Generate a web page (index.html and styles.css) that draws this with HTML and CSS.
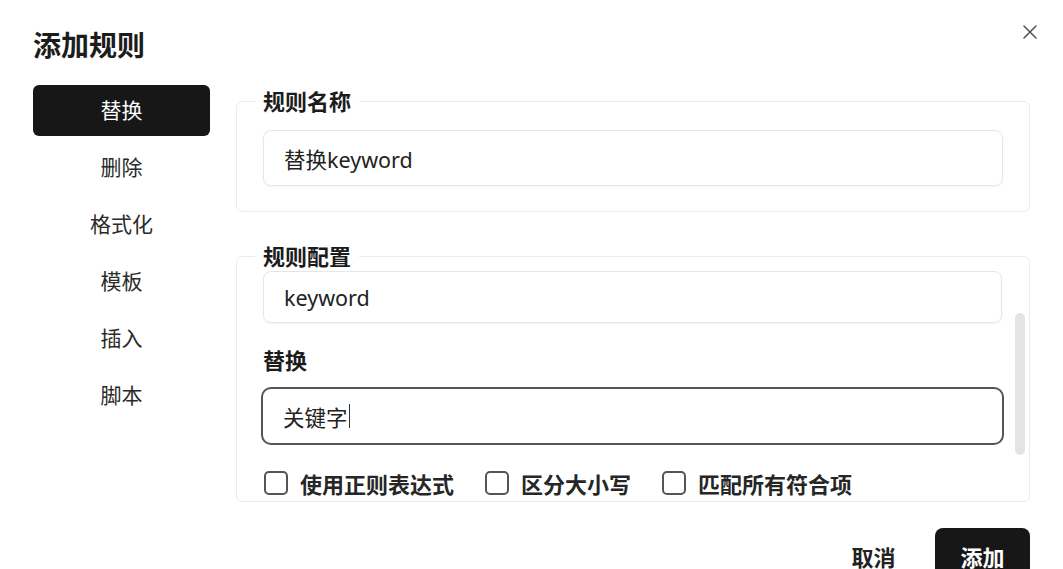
FILE: index.html
```html
<!DOCTYPE html>
<html lang="zh">
  <head>
    <meta charset="UTF-8">
    <meta name="viewport" content="width=device-width, initial-scale=1">
    <link rel="stylesheet" href="styles.css">
  </head>
  <body>
    <div class="dialog">
      <div class="header">
        <h1 class="title">添加规则</h1>
        <span class="close">
          <svg width="16" height="16" viewBox="0 0 16 16"><path d="M2 2L14 14M14 2L2 14" stroke="#555" stroke-width="1.6" stroke-linecap="round"/></svg>
        </span>
      </div>

      <div class="content">
        <ul class="menu">
          <li class="menu-item active">替换</li>
          <li class="menu-item">删除</li>
          <li class="menu-item">格式化</li>
          <li class="menu-item">模板</li>
          <li class="menu-item">插入</li>
          <li class="menu-item">脚本</li>
        </ul>

        <div class="main">
          <fieldset class="group">
            <legend>规则名称</legend>
            <div class="field">替换keyword</div>
          </fieldset>

          <fieldset class="group config">
            <legend>规则配置</legend>
            <div class="scroll">
              <div class="scroll-body">
                <div class="field short">keyword</div>
                <div class="label">替换</div>
                <div class="field focused">关键字<span class="caret"></span></div>
                <div class="checks">
                  <label class="check"><span class="box"></span>使用正则表达式</label>
                  <label class="check"><span class="box"></span>区分大小写</label>
                  <label class="check"><span class="box"></span>匹配所有符合项</label>
                </div>
              </div>
              <div class="scrollbar"><div class="thumb"></div></div>
            </div>
          </fieldset>

          <div class="footer">
            <button class="btn ghost">取消</button>
            <button class="btn primary">添加</button>
          </div>
        </div>
      </div>
    </div>
  </body>
</html>
```

FILE: styles.css
```css
html, body {
  margin: 0;
  height: 100%;
  overflow: hidden;
  background: #fff;
}
body {
  font-family: "Noto Sans", "Noto Sans CJK SC", sans-serif;
  color: #222;
}
.dialog {
  padding: 25px 33px 0 33px;
}
.header {
  display: flex;
  justify-content: space-between;
  align-items: center;
  height: 40px;
}
.title {
  margin: 0;
  font-size: 28px;
  line-height: 40px;
  font-weight: 700;
  color: #1c1c1c;
}
.close {
  display: flex;
  margin-right: -8px;
  margin-top: -26px;
}
.content {
  display: flex;
  gap: 26px;
  margin-top: 20px;
}
.menu {
  list-style: none;
  margin: 0;
  padding: 0;
  width: 177px;
  flex: none;
  display: flex;
  flex-direction: column;
  gap: 6px;
}
.menu-item {
  height: 51px;
  line-height: 51px;
  text-align: center;
  font-size: 21px;
  color: #2a2a2a;
  border-radius: 6px;
}
.menu-item.active {
  background: #171717;
  color: #fff;
}
.main {
  flex: 1;
  margin-top: 1px;
}
.group {
  margin: 0;
  padding: 14px 26px 25px 26px;
  border: 1px solid #ebebeb;
  border-radius: 6px;
  min-width: 0;
}
.group legend {
  font-size: 22px;
  font-weight: 700;
  line-height: 30px;
  padding: 0 8px;
  margin-left: -8px;
  color: #1c1c1c;
}
.field {
  height: 56px;
  box-sizing: border-box;
  border: 1px solid #e6e6e6;
  border-radius: 8px;
  box-shadow: 0 1px 2px rgba(0, 0, 0, 0.05);
  padding: 0 20px;
  display: flex;
  align-items: center;
  font-size: 21.5px;
  color: #222;
}
.config {
  margin-top: 29px;
  padding: 0 4px 3px 26px;
}
.scroll {
  display: flex;
}
.scroll-body {
  flex: 1;
  min-width: 0;
}
.field.short {
  height: 52px;
}
.label {
  margin-top: 22px;
  font-size: 22px;
  font-weight: 700;
  line-height: 30px;
  color: #1c1c1c;
}
.field.focused {
  margin: 12px -2px 0 -2px;
  height: 58px;
  border: 2px solid #555;
  border-radius: 10px;
  box-shadow: none;
}
.caret {
  display: inline-block;
  width: 1px;
  height: 24px;
  background: #333;
  margin-left: 1px;
}
.checks {
  display: flex;
  gap: 30px;
  margin-top: 23px;
  height: 30px;
  align-items: center;
}
.check {
  display: flex;
  align-items: center;
  gap: 12px;
  font-size: 22px;
  font-weight: 700;
  color: #262626;
}
.box {
  width: 20px;
  height: 20px;
  border: 2px solid #555;
  border-radius: 5px;
  margin-left: 1px;
}
.scrollbar {
  width: 10px;
  margin-left: 13px;
  flex: none;
}
.thumb {
  margin-top: 42px;
  height: 142px;
  border-radius: 5px;
  background: #e4e4e4;
}
.footer {
  display: flex;
  justify-content: flex-end;
  gap: 14px;
  margin-top: 26px;
}
.btn {
  font-family: inherit;
  font-size: 22px;
  height: 56px;
  width: 95px;
  border: none;
  border-radius: 8px;
  font-weight: 700;
  padding: 0;
}
.btn.ghost {
  background: transparent;
  color: #222;
}
.btn.primary {
  background: #171717;
  color: #fff;
}
```
